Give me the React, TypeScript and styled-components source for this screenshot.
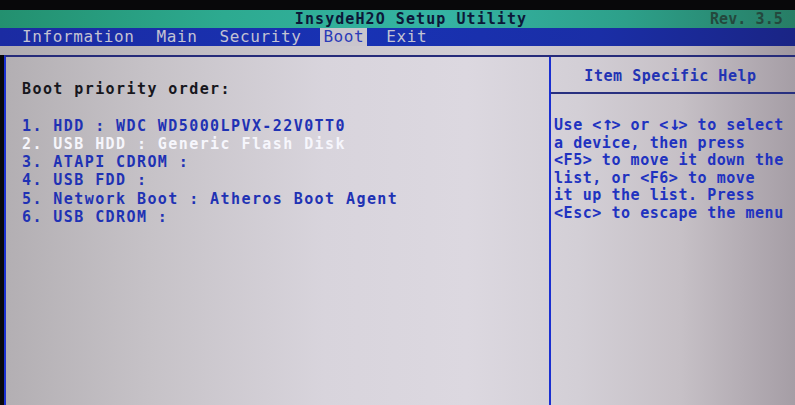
import React from "react";
import styled, { createGlobalStyle } from "styled-components";

const GlobalStyle = createGlobalStyle`
  html, body {
    margin: 0;
    padding: 0;
    background: #060608;
    overflow: hidden;
  }
  #root {
    width: 795px;
    height: 405px;
    overflow: hidden;
  }
`;

const MONO = `"DejaVu Sans Mono", "Liberation Mono", monospace`;

const Screen = styled.div`
    width: 800px;
    height: 405px;
    padding-top: 10px;
    box-sizing: border-box;
    background: #08080a;
    font-family: ${MONO};
    display: flex;
    flex-direction: column;
`;

const TitleBar = styled.header`
    height: 18px;
    box-sizing: border-box;
    padding: 0.5px 17px 0 39px;
    display: grid;
    grid-template-columns: 1fr auto 1fr;
    background: linear-gradient(90deg, #23906f 0%, #2daa90 28%, #35b4a3 55%, #2da08a 78%, #277c64 100%);
    font-size: 15px;
    line-height: 16px;
    font-weight: 700;
`;

const Title = styled.div`
    grid-column: 2;
    color: #0c1838;
    letter-spacing: 1.07px;
`;

const Revision = styled.div`
    grid-column: 3;
    justify-self: end;
    color: #24483d;
    letter-spacing: 0.1px;
`;

const MenuBar = styled.nav`
    height: 18px;
    display: flex;
    gap: 22px;
    padding-left: 22px;
    background: linear-gradient(90deg, #1b2ba2 0%, #1832b4 45%, #1a2ea6 75%, #1a2484 100%);
    font-size: 16px;
    line-height: 18px;
    letter-spacing: 0.6px;
    color: #c3c3d3;
`;

const MenuItem = styled.span<{ $active?: boolean }>`
    padding: ${(p) => (p.$active ? "0 3px" : "0")};
    margin: ${(p) => (p.$active ? "0 -3px" : "0")};
    background: ${(p) => (p.$active ? "#c9c5cd" : "transparent")};
    color: ${(p) => (p.$active ? "#2a3ab8" : "inherit")};
`;

const Strip = styled.div`
    height: 9px;
    background: linear-gradient(90deg, #b0acb0 0%, #c8c4ca 35%, #d2ced4 60%, #c0bac0 85%, #9e969e 100%);
`;

const Panel = styled.main`
    flex: 1;
    display: flex;
    margin-left: 4px;
    border-left: 2px solid #1a2fd0;
    border-top: 2px solid #262b7a;
    background: linear-gradient(90deg, #b3afb3 0%, #c6c2c7 18%, #d8d4dc 40%, #dcd8e0 58%, #d3cfd6 72%, #c6c0c6 85%, #a49ca4 100%);
`;

const BootColumn = styled.section`
    width: 543px;
    box-sizing: border-box;
    padding: 23px 0 0 16px;
    font-size: 15px;
    font-weight: 700;
    letter-spacing: 1.42px;
`;

const SectionTitle = styled.div`
    color: #17171d;
    line-height: 18px;
`;

const BootList = styled.div`
    margin-top: 18.5px;
    line-height: 18.3px;
`;

const BootEntry = styled.div<{ $selected?: boolean }>`
    white-space: pre;
    color: ${(p) => (p.$selected ? "#f6f6fc" : "#1f32b4")};
`;

const HelpColumn = styled.aside`
    flex: 1;
    border-left: 2px solid #1a2fd0;
    font-size: 15px;
    font-weight: 700;
    letter-spacing: 0.54px;
    color: #2032c0;
`;

const HelpHeader = styled.div`
    height: 37px;
    box-sizing: border-box;
    padding: 10px 10px 0 0;
    text-align: center;
    line-height: 18px;
    border-bottom: 2px solid #283080;
    color: #2233b4;
`;

const HelpBody = styled.div`
    padding: 23px 0 0 3px;
    line-height: 17.6px;
`;

const HelpLine = styled.div`
    white-space: pre;
`;

// the BIOS font draws its arrows as tall as a capital
const Arrow = styled.span`
    font-size: 19px;
    line-height: 0;
    letter-spacing: -1.87px;
`;

const menu = ["Information", "Main", "Security", "Boot", "Exit"];

const bootOrder = [
    { text: "1. HDD : WDC WD5000LPVX-22V0TT0" },
    { text: "2. USB HDD : Generic Flash Disk", selected: true },
    { text: "3. ATAPI CDROM :" },
    { text: "4. USB FDD :" },
    { text: "5. Network Boot : Atheros Boot Agent" },
    { text: "6. USB CDROM :" },
];

const help = [
    "a device, then press",
    "<F5> to move it down the",
    "list, or <F6> to move",
    "it up the list. Press",
    "<Esc> to escape the menu",
];

const App = () => {
    return (
        <>
            <GlobalStyle />
            <Screen>
                <TitleBar>
                    <Title>InsydeH2O Setup Utility</Title>
                    <Revision>Rev. 3.5</Revision>
                </TitleBar>
                <MenuBar>
                    {menu.map((m) => (
                        <MenuItem key={m} $active={m === "Boot"}>{m}</MenuItem>
                    ))}
                </MenuBar>
                <Strip />
                <Panel>
                    <BootColumn>
                        <SectionTitle>Boot priority order:</SectionTitle>
                        <BootList>
                            {bootOrder.map((b) => (
                                <BootEntry key={b.text} $selected={b.selected}>{b.text}</BootEntry>
                            ))}
                        </BootList>
                    </BootColumn>
                    <HelpColumn>
                        <HelpHeader>Item Specific Help</HelpHeader>
                        <HelpBody>
                            <HelpLine>
                                Use &lt;<Arrow>{"\u2191"}</Arrow>&gt; or &lt;<Arrow>{"\u2193"}</Arrow>&gt; to select
                            </HelpLine>
                            {help.map((line, i) => (
                                <HelpLine key={i}>{line}</HelpLine>
                            ))}
                        </HelpBody>
                    </HelpColumn>
                </Panel>
            </Screen>
        </>
    );
};

export default App;
